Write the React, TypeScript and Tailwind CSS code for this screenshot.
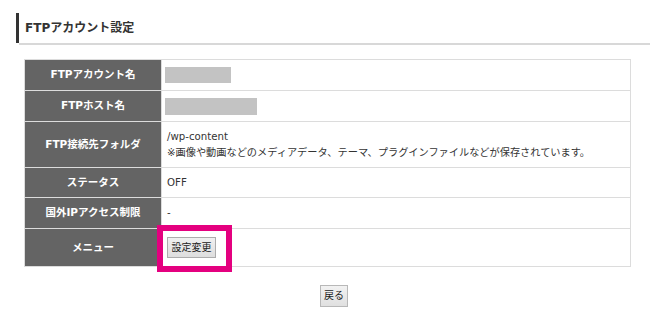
const font = { fontFamily: '"DejaVu Sans", "Noto Sans CJK JP", sans-serif' };

type Row = {
  label: string;
  height: string;
  content: React.ReactNode;
};

function Masked({ w, h }: { w: string; h: string }) {
  return <div className={`${w} ${h} -ml-[2px] bg-[#c3c3c3]`} />;
}

export default function App() {
  const rows: Row[] = [
    { label: "FTPアカウント名", height: "h-[30px]", content: <Masked w="w-[66px]" h="h-[16px]" /> },
    { label: "FTPホスト名", height: "h-[30px]", content: <Masked w="w-[92px]" h="h-[17px]" /> },
    {
      label: "FTP接続先フォルダ",
      height: "h-[45px]",
      content: (
        <div className="leading-[16px]">
          <div>/wp-content</div>
          <div>※画像や動画などのメディアデータ、テーマ、プラグインファイルなどが保存されています。</div>
        </div>
      ),
    },
    { label: "ステータス", height: "h-[29px]", content: <span>OFF</span> },
    { label: "国外IPアクセス制限", height: "h-[30px]", content: <span>-</span> },
    {
      label: "メニュー",
      height: "h-[37px]",
      content: (
        <span className="relative inline-flex">
          <button className="h-[21px] w-[49px] border border-[#acacac] bg-gradient-to-b from-[#f0f0f0] to-[#dedede] text-[10px] text-[#222] leading-none">
            設定変更
          </button>
          {/* annotation frame */}
          <span className="pointer-events-none absolute -left-[10px] -top-[12px] h-[47px] w-[75px] border-[6px] border-[#e4007f]" />
        </span>
      ),
    },
  ];

  return (
    <div className="min-h-[318px] w-[650px] bg-white text-[#333]" style={font}>
      <div className="flex pl-[16px] pt-[13px]">
        <div className="h-[30px] w-[3px] bg-[#333]" />
        <div className="flex h-[32px] flex-1 items-start border-b-2 border-[#d8d8d8]">
          <h2 className="flex h-[30px] items-center pl-[6px] text-[12px] font-bold text-[#333]">
            FTPアカウント設定
          </h2>
        </div>
      </div>

      <div className="ml-[24px] mt-[14px] w-[607px] border border-[#dcdcdc] text-[10.2px]">
        {rows.map((row, i) => (
          <div key={row.label} className={`flex ${i < rows.length - 1 ? "border-b border-[#dcdcdc]" : ""}`}>
            <div className={`${row.height} flex w-[136px] shrink-0 items-center justify-center bg-[#646464] text-[10.5px] font-bold text-white`}>
              {row.label}
            </div>
            <div className={`${row.height} flex flex-1 items-center border-l border-[#dcdcdc] pl-[5px]`}>
              {row.content}
            </div>
          </div>
        ))}
      </div>

      <div className="ml-[25px] mt-[18px] flex w-[605px] justify-center pl-[13px]">
        <button className="h-[22px] w-[28px] border border-[#b8b8b8] bg-gradient-to-b from-[#f2f2f2] to-[#e0e0e0] text-[10px] leading-none text-[#222]">
          戻る
        </button>
      </div>
    </div>
  );
}
